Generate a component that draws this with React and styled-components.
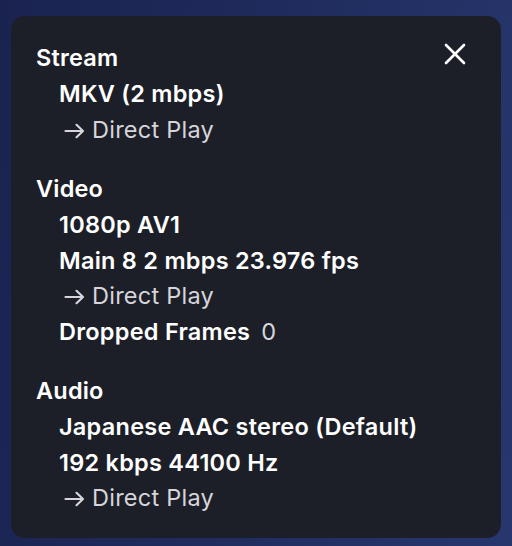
import styled, { createGlobalStyle } from "styled-components";

const GlobalStyle = createGlobalStyle`
    html, body {
        margin: 0;
        padding: 0;
        height: 100%;
    }
    body {
        font-family: Inter, "Noto Sans", sans-serif;
        background: linear-gradient(100deg, #1a2350 0%, #1f2b5c 45%, #27376e 100%);
        overflow: hidden;
    }
`;

const Page = styled.div`
    width: 512px;
    height: 546px;
    padding: 16px 11px 8px 11px;
    box-sizing: border-box;
`;

const Panel = styled.div`
    position: relative;
    background-color: #1d1f28;
    border-radius: 14px;
    padding: 24px 25px 22px 25px;
    box-sizing: border-box;
    height: 522px;
    display: flex;
    flex-direction: column;
    gap: 24px;
`;

const CloseButton = styled.button`
    position: absolute;
    top: 25px;
    right: 33px;
    width: 26px;
    height: 26px;
    padding: 0;
    border: none;
    background: none;
    cursor: pointer;
    display: flex;
    align-items: center;
    justify-content: center;
`;

const Section = styled.div`
    display: flex;
    flex-direction: column;
`;

const Title = styled.div`
    font-size: 23.5px;
    font-weight: 600;
    color: #ffffff;
    line-height: 36px;
    letter-spacing: 0.2px;
`;

const Row = styled.div`
    display: flex;
    align-items: center;
    padding-left: 23px;
    font-size: 23.5px;
    line-height: 35.5px;
    height: 35.5px;
    font-weight: 600;
    color: #ffffff;
    letter-spacing: 0.25px;
    white-space: nowrap;
`;

const Status = styled(Row)`
    padding-left: 28px;
    font-weight: 400;
    color: #d6d6da;
    gap: 7px;
`;

const Value = styled.span`
    font-weight: 400;
    color: #d6d6da;
    margin-left: 11px;
`;

function CloseIcon() {
    return (
        <svg width="22" height="22" viewBox="0 0 22 22">
            <path d="M2 2 L20 20 M20 2 L2 20" stroke="#ffffff" strokeWidth="2.6" strokeLinecap="round" />
        </svg>
    );
}

function ArrowIcon() {
    return (
        <svg width="21" height="16" viewBox="0 0 21 16" style={{ marginTop: 3 }}>
            <path
                d="M1.5 8 H19 M12.5 1.8 L19 8 L12.5 14.2"
                stroke="#d6d6da"
                strokeWidth="2.2"
                fill="none"
                strokeLinecap="round"
                strokeLinejoin="round"
            />
        </svg>
    );
}

const sections = [
    { title: "Stream", rows: ["MKV (2 mbps)"] },
    { title: "Video", rows: ["1080p AV1", "Main 8 2 mbps 23.976 fps"], dropped: "0" },
    { title: "Audio", rows: ["Japanese AAC stereo (Default)", "192 kbps 44100 Hz"] },
];

export default function App() {
    return (
        <>
            <GlobalStyle />
            <Page>
                <Panel>
                    <CloseButton aria-label="Close">
                        <CloseIcon />
                    </CloseButton>
                    {sections.map((s) => (
                        <Section key={s.title}>
                            <Title>{s.title}</Title>
                            {s.rows.map((r) => (
                                <Row key={r}>{r}</Row>
                            ))}
                            <Status>
                                <ArrowIcon />
                                Direct Play
                            </Status>
                            {s.dropped && (
                                <Row>
                                    Dropped Frames<Value>{s.dropped}</Value>
                                </Row>
                            )}
                        </Section>
                    ))}
                </Panel>
            </Page>
        </>
    );
}
